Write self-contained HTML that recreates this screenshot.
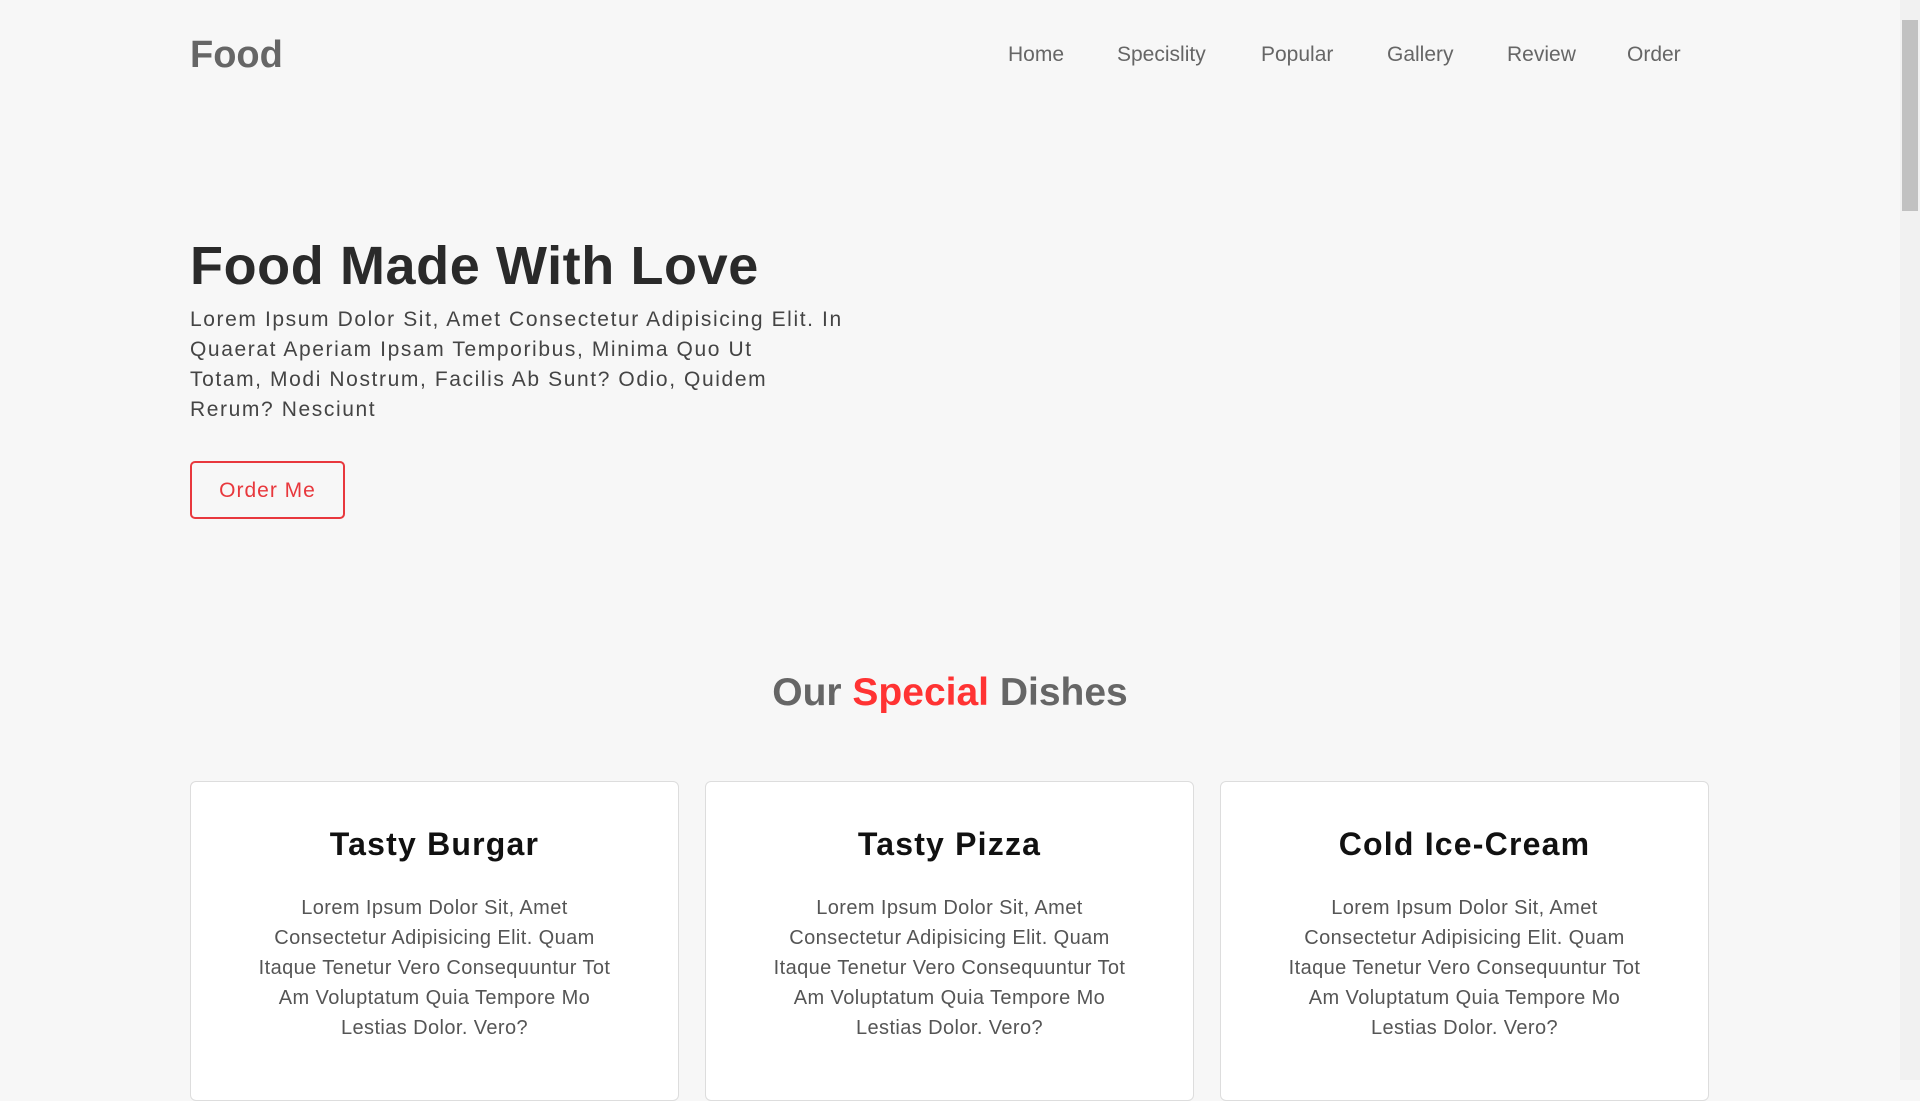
<!DOCTYPE html>
<html><head><meta charset="utf-8"><style>
*{margin:0;padding:0;box-sizing:border-box}
html,body{width:1920px;height:1080px;overflow:hidden;background:#f7f7f7;font-family:"Liberation Sans",sans-serif}
.logo{position:absolute;left:190px;top:34px;font-size:38px;font-weight:bold;color:#666}
nav{position:absolute;top:43px;left:0;width:1900px}
nav a{position:absolute;font-size:21px;color:#666;text-decoration:none}
h1{position:absolute;left:190px;top:235px;font-size:54px;color:#2a2a2a;letter-spacing:0.6px}
.p{position:absolute;left:190px;top:305px;width:900px;font-size:21px;line-height:30px;color:#444;letter-spacing:1.6px}
.btn{position:absolute;left:190px;top:461px;width:155px;height:58px;border:2px solid #e8383d;border-radius:5px;color:#e8383d;font-size:21px;letter-spacing:1px;text-align:center;line-height:56px}
h2{position:absolute;left:0;width:1900px;text-align:center;top:671px;font-size:39px;color:#666}
h2 span{color:#f33}
.card{position:absolute;top:781px;width:489px;height:320px;background:#fff;border:1px solid #ddd;border-radius:6px;text-align:center}
.card h3{margin-top:44px;font-size:32px;color:#111;letter-spacing:1.2px}
.card p{margin:30px auto 0;width:480px;font-size:20px;line-height:30px;color:#555;letter-spacing:0.4px}
.sb{position:absolute;right:0;top:0;width:20px;height:1080px;background:#f1f1f1}
.th{position:absolute;right:2px;top:20px;width:16px;height:191px;background:#c1c1c1}
</style></head><body>
<div class="logo">Food</div>
<nav><a style="left:1008px">Home</a><a style="left:1117px">Specislity</a><a style="left:1261px">Popular</a><a style="left:1387px">Gallery</a><a style="left:1507px">Review</a><a style="left:1627px">Order</a></nav>
<h1>Food Made With Love</h1>
<div class="p">Lorem Ipsum Dolor Sit, Amet Consectetur Adipisicing Elit. In<br>Quaerat Aperiam Ipsam Temporibus, Minima Quo Ut<br>Totam, Modi Nostrum, Facilis Ab Sunt? Odio, Quidem<br>Rerum? Nesciunt</div>
<div class="btn">Order Me</div>
<h2>Our <span>Special</span> Dishes</h2>
<div class="card" style="left:190px"><h3>Tasty Burgar</h3><p>Lorem Ipsum Dolor Sit, Amet<br>Consectetur Adipisicing Elit. Quam<br>Itaque Tenetur Vero Consequuntur Tot<br>Am Voluptatum Quia Tempore Mo<br>Lestias Dolor. Vero?</p></div>
<div class="card" style="left:705px"><h3>Tasty Pizza</h3><p>Lorem Ipsum Dolor Sit, Amet<br>Consectetur Adipisicing Elit. Quam<br>Itaque Tenetur Vero Consequuntur Tot<br>Am Voluptatum Quia Tempore Mo<br>Lestias Dolor. Vero?</p></div>
<div class="card" style="left:1220px"><h3>Cold Ice-Cream</h3><p>Lorem Ipsum Dolor Sit, Amet<br>Consectetur Adipisicing Elit. Quam<br>Itaque Tenetur Vero Consequuntur Tot<br>Am Voluptatum Quia Tempore Mo<br>Lestias Dolor. Vero?</p></div>
<div class="sb"><div class="th"></div></div>
</body></html>
